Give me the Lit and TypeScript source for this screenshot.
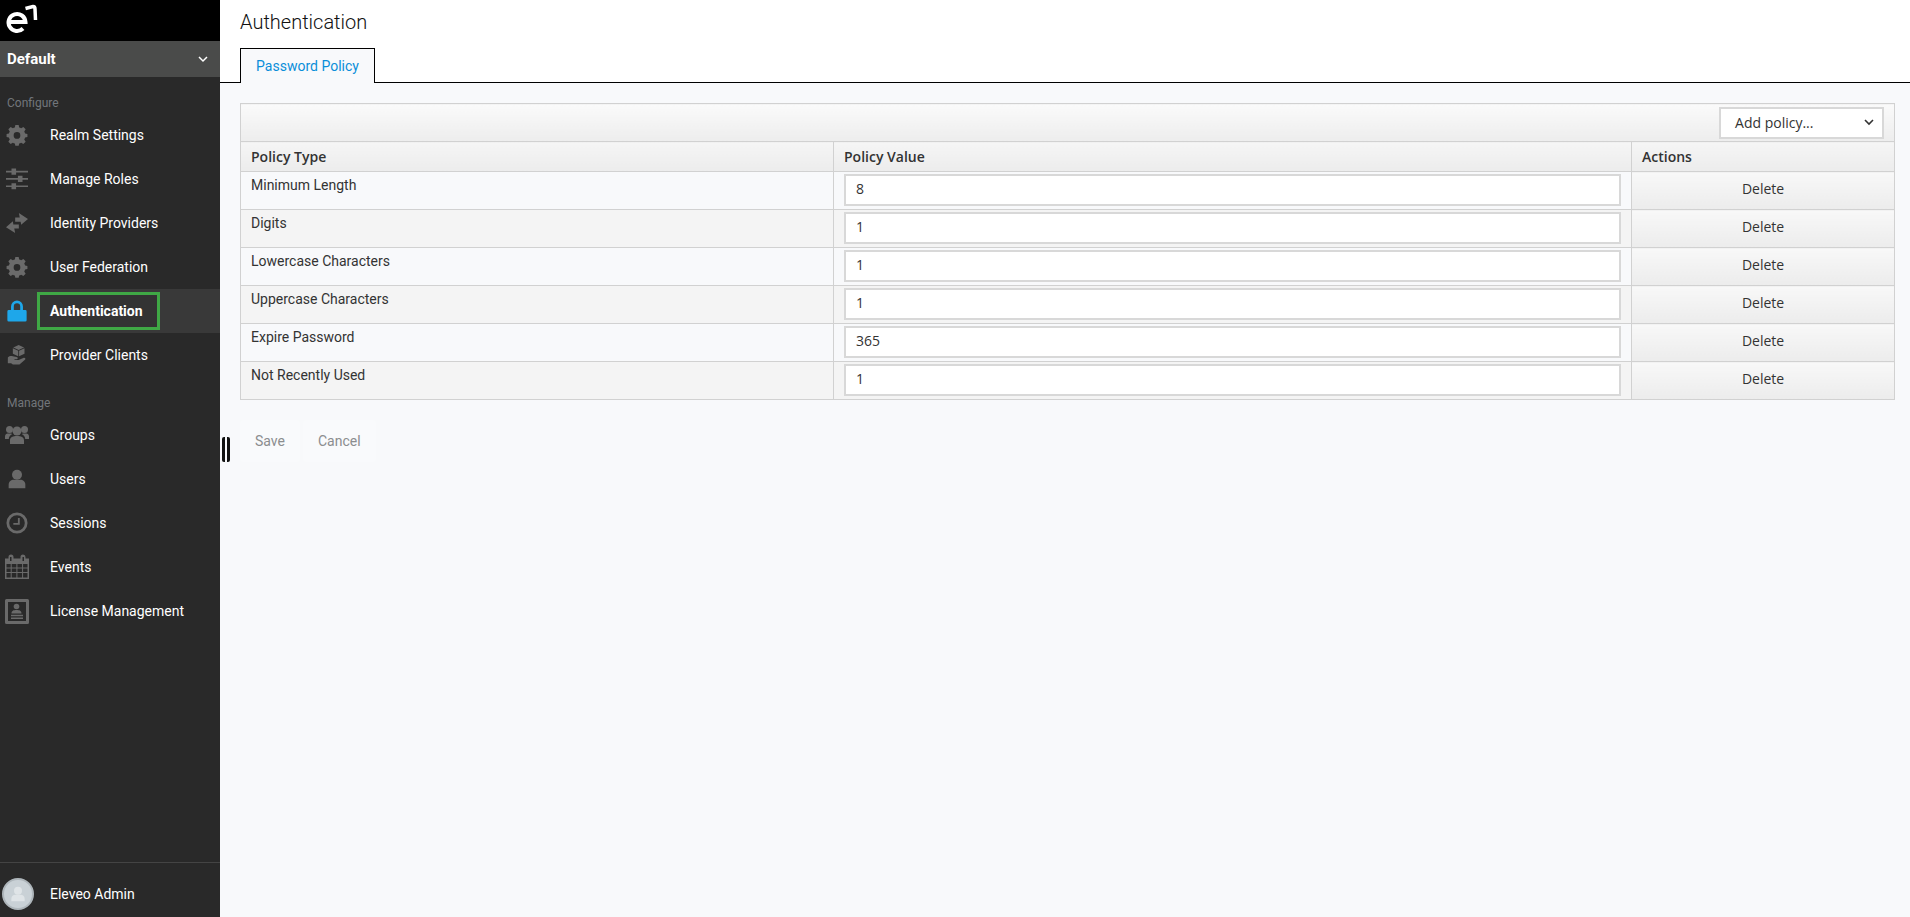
import { LitElement, html, css, svg } from "lit";
import { customElement } from "lit/decorators.js";

const gear = svg`<path fill-rule="evenodd" d="M10 0h4l.6 3a9 9 0 0 1 2.400 1l2.600-1.700 2.800 2.800L20.700 7.700a9 9 0 0 1 1 2.400l2.800.6v3.800l-2.800.6a9 9 0 0 1-1 2.400l1.700 2.600-2.800 2.800-2.600-1.700a9 9 0 0 1-2.400 1l-.6 2.800h-4l-.6-2.800a9 9 0 0 1-2.400-1l-2.600 1.700-2.800-2.800 1.700-2.600a9 9 0 0 1-1-2.400L-.5 14.500v-3.800l2.800-.6a9 9 0 0 1 1-2.400L1.600 5.100l2.800-2.800L7 4a9 9 0 0 1 2.400-1zM12 8.500a4 4 0 1 0 0 8 4 4 0 0 0 0-8z"/>`;
const icons: Record<string, unknown> = {
  gear,
  sliders: svg`<path d="M0 3h6V.5h5V3h13v1.800H11v2.500H6V4.800H0zM0 11h13V8.500h5V11h6v1.800h-6v2.500h-5v-2.500H0zM0 19h6v-2.500h5V19h13v1.800H11v2.500H6v-2.500H0z"/>`,
  arrows: svg`<path d="M14 1l10 6.500-7.500 6.500-.5-3.500H10V6h5zM10 23L0 16.500 7.500 10l.5 3.500h6V18H9z"/>`,
  lock: svg`<path d="M5.500 11V7a6.500 6.500 0 0 1 13 0v4h2.500a1.500 1.500 0 0 1 1.500 1.500V22a1.500 1.500 0 0 1-1.500 1.500H3A1.500 1.500 0 0 1 1.500 22V12.500A1.500 1.500 0 0 1 3 11zM8.500 11h7V7a3.500 3.500 0 0 0-7 0z"/>`,
  box: svg`<path d="M14 0l6.500 3-6.500 3-6.500-3zM7 4l6.500 3v6.500L7 10.500zM21 4v6.500l-6.500 3V7zM1 15c2-2 4-2 6-1.500l4.500 1c2 .5 2 2.500 0 2.500H9v1h5l5.500-2.500c2-1 3.500 1 2 2.200L15 23.500H7l-2-1.500H1z"/>`,
  groups: svg`<circle cx="12" cy="8" r="4.500"/><circle cx="4.500" cy="6.500" r="3.500"/><circle cx="19.500" cy="6.500" r="3.500"/><path d="M5 21v-3.500C5 14 8 13 12 13s7 1 7 4.500V21zM0 16v-2.500C0 11 1.500 10.500 4.500 10.500c1 0 2 .1 2.800.4C5 12 3.800 14 3.800 16zM24 16v-2.500c0-2.500-1.500-3-4.500-3-1 0-2 .1-2.800.4 2.300 1.100 3.500 3.100 3.500 5.100z"/>`,
  user: svg`<circle cx="12" cy="7" r="6"/><path d="M2 23v-4c0-4 3-6 6-6h8c3 0 6 2 6 6v4z"/>`,
  clock: svg`<path fill-rule="evenodd" d="M12 .5a11.500 11.500 0 1 1 0 23 11.500 11.500 0 0 1 0-23zm0 3a8.500 8.500 0 1 0 0 17 8.500 8.500 0 0 0 0-17z"/><path d="M13 6.500h2V14H8v-2h5z"/>`,
  cal: svg`<path fill-rule="evenodd" d="M0 3.500h3.500V2a2.500 2.500 0 0 1 5 0v1.500h7V2a2.500 2.500 0 0 1 5 0v1.500H24V24H0zM5 2v4h1.500V2zM17.500 2v4H19V2zM1.500 9v3.500h4.200V9zm5.200 0v3.500h4.700V9zm5.700 0v3.500h4.700V9zm5.700 0v3.500h4.400V9zM1.500 13.500v3.500h4.200v-3.500zm5.200 0v3.500h4.700v-3.500zm5.700 0v3.500h4.700v-3.500zm5.700 0v3.500h4.400v-3.500zM1.500 18v4.500h4.200V18zm5.200 0v4.500h4.700V18zm5.700 0v4.500h4.700V18zm5.700 0v4.500h4.400V18z"/>`,
  license: svg`<path fill-rule="evenodd" d="M1.500 0h21A1.500 1.500 0 0 1 24 1.500v22a1.500 1.500 0 0 1-1.500 1.500h-21A1.500 1.500 0 0 1 0 23.500v-22A1.500 1.500 0 0 1 1.500 0zM3 3v19h18V3z"/><circle cx="11.500" cy="7.500" r="2.800"/><path d="M6.500 14.500c0-2.800 2-3.500 5-3.500s5 .7 5 3.500zM6 15.800h12v1.400H6zM6 18.500h12v1.400H6z"/>`,
};

const configure = [
  ["gear", "Realm Settings"],
  ["sliders", "Manage Roles"],
  ["arrows", "Identity Providers"],
  ["gear", "User Federation"],
  ["lock", "Authentication"],
  ["box", "Provider Clients"],
];
const manage = [
  ["groups", "Groups"],
  ["user", "Users"],
  ["clock", "Sessions"],
  ["cal", "Events"],
  ["license", "License Management"],
];
const policies = [
  ["Minimum Length", "8"],
  ["Digits", "1"],
  ["Lowercase Characters", "1"],
  ["Uppercase Characters", "1"],
  ["Expire Password", "365"],
  ["Not Recently Used", "1"],
];

@customElement("app-root")
export class AppRoot extends LitElement {
  static styles = css`
    :host { display: block; width: 1910px; height: 917px; overflow: hidden; font-family: Roboto, sans-serif; color: #333; }
    .page { display: flex; height: 917px; }
    .side { width: 220px; flex: none; background: #292929; color: #fff; display: flex; flex-direction: column; }
    .logo { height: 41px; background: #000; flex: none; }
    .logo svg { display: block; }
    .realm { height: 36px; flex: none; background: #4a4b4a; display: flex; align-items: center; justify-content: space-between; padding: 0 12px 0 7px; font-size: 15px; font-weight: 700; }
    .cat { height: 20px; line-height: 20px; font-size: 12px; color: #72767b; padding-left: 7px; }
    .cat.first { margin-top: 16px; }
    .cat.second { margin-top: 16px; }
    .nav { height: 44px; display: flex; align-items: center; font-size: 14px; }
    .ic { width: 22px; height: 22px; margin: 0 22px 0 6px; fill: #6a6a6a; flex: none; overflow: visible; }
    .ic.gear, .ic.box, .ic.user { width: 20px; height: 20px; margin: 0 23px 0 7px; }
    .ic.cal, .ic.groups { width: 24px; height: 24px; margin: 0 21px 0 5px; }
    .ic.license { width: 24px; height: 24px; margin: 0 21px 0 5px; }
    .nav.on { background: #393939; font-weight: 700; }
    .nav.on .ic { fill: #1ea7ea; }
    .nav.on .txt { box-sizing: border-box; width: 123px; height: 38px; line-height: 32px; border: 3px solid #3fa845; padding-left: 10px; margin-left: -13px; background: #333; }
    .grow { flex: 1; }
    .foot { height: 55px; box-sizing: border-box; padding-top: 7px; flex: none; border-top: 1px solid #444; display: flex; align-items: center; font-size: 14px; }
    .avatar { width: 32px; height: 32px; border-radius: 50%; margin: 0 16px 0 2px; background: #c9d1d6; box-sizing: border-box; border: 2px solid #aeb6bb; display: flex; align-items: center; justify-content: center; }
    .avatar svg { width: 16px; height: 16px; fill: #dfe4e7; }
    main { flex: 1; background: #f8f9fb; display: flex; flex-direction: column; position: relative; min-width: 0; }
    .head { height: 82px; flex: none; background: #fff; border-bottom: 1px solid #000; padding-left: 20px; position: relative; }
    h1 { margin: 0; padding-top: 11px; font-size: 20px; font-weight: 300; line-height: 22px; color: #111; }
    .tab { position: absolute; left: 20px; top: 48px; width: 135px; height: 35px; box-sizing: border-box; border: 1px solid #000; border-bottom: none; background: #f8f9fb; color: #0a8ed9; font-size: 14px; display: flex; align-items: center; justify-content: center; }
    .wrap { padding: 20px 15px 0 20px; }
    table { width: 1654px; border-collapse: collapse; table-layout: fixed; font-size: 13px; }
    td, th { border: 1px solid #d1d1d1; box-sizing: border-box; padding: 0; }
    .bar td { height: 38px; background: linear-gradient(#fafafa, #ededed); vertical-align: middle; padding-right: 10px; }
    .bar td > div { display: flex; justify-content: flex-end; }
    .sel { width: 165px; height: 32px; box-sizing: border-box; background: #fff; border: 2px solid #d8d8d8; font-family: "Open Sans", sans-serif; font-size: 14px; color: #333; display: flex; align-items: center; justify-content: space-between; padding: 0 8px 0 14px; }
    th { height: 30px; background: linear-gradient(#f5f5f5, #ececec); font-family: "Open Sans", sans-serif; font-size: 14px; font-weight: 600; text-align: left; padding-left: 10px; color: #333; }
    td.c { height: 38px; vertical-align: top; font-size: 14px; }
    tr.o td.c { background: #f8f9fb; }
    tr.e td.c { background: #f4f4f4; }
    td.name { padding: 3px 0 0 10px; line-height: 20px; color: #333; }
    td.val { padding: 2px 10px 0 10px; }
    .inp { height: 32px; box-sizing: border-box; background: #fff; border: 2px solid #d8d8d8; font-family: "Open Sans", sans-serif; font-size: 14px; display: flex; align-items: center; padding: 0 0 3px 10px; color: #333; }
    tr td.act, tr.o td.act, tr.e td.act { background: linear-gradient(#f8f8f8, #ececec); text-align: center; vertical-align: middle; padding-bottom: 4px; font-family: "Open Sans", sans-serif; font-size: 14px; }
    .btns { display: flex; margin-top: 20px; }
    .btn { height: 42px; display: flex; align-items: center; padding: 0 15px; font-size: 14px; color: #8b8d8f; background: #f9fafc; border-radius: 4px; margin-right: 3px; }
    .grip { position: absolute; left: 2px; top: 437px; width: 2px; height: 25px; border-left: 3px solid #111; border-right: 3px solid #111; border-radius: 2px; }
  `;

  render() {
    const item = ([ic, label]: string[]) => html`<div class="nav ${label === "Authentication" ? "on" : ""}">
      <svg class="ic ${ic}" viewBox="0 0 24 24">${icons[ic]}</svg><span class="txt">${label}</span></div>`;
    return html`<div class="page">
      <aside class="side">
        <div class="logo"><svg width="40" height="41" viewBox="0 0 40 41" fill="none" stroke="#fff">
          <path d="M8.500 22H25.500A8.500 8.500 0 1 0 23 28.500" stroke-width="4"/><path d="M25.500 8.500L33 6.500Q35 6.500 35 9L35.500 20" stroke-width="3.500"/></svg></div>
        <div class="realm"><span>Default</span><svg width="10" height="7" viewBox="0 0 10 7" fill="none" stroke="#fff" stroke-width="1.500"><path d="M1 1l4 4 4-4"/></svg></div>
        <div class="cat first">Configure</div>
        ${configure.map(item)}
        <div class="cat second">Manage</div>
        ${manage.map(item)}
        <div class="grow"></div>
        <div class="foot"><div class="avatar"><svg viewBox="0 0 24 24">${icons.user}</svg></div><span>Eleveo Admin</span></div>
      </aside>
      <main>
        <div class="head"><h1>Authentication</h1><div class="tab">Password Policy</div></div>
        <div class="wrap">
          <table>
            <colgroup><col style="width:593px" /><col style="width:798px" /><col style="width:263px" /></colgroup>
            <tbody>
              <tr class="bar"><td colspan="3"><div><div class="sel"><span>Add policy...</span>
                <svg width="10" height="7" viewBox="0 0 10 7" fill="none" stroke="#333" stroke-width="1.600"><path d="M1 1l4 4 4-4"/></svg></div></div></td></tr>
              <tr><th>Policy Type</th><th>Policy Value</th><th>Actions</th></tr>
              ${policies.map(([n, v], i) => html`<tr class="${i % 2 ? "e" : "o"}"><td class="c name">${n}</td><td class="c val"><div class="inp">${v}</div></td><td class="c act">Delete</td></tr>`)}
            </tbody>
          </table>
          <div class="btns"><div class="btn">Save</div><div class="btn">Cancel</div></div>
        </div>
        <div class="grip"></div>
      </main>
    </div>`;
  }
}
